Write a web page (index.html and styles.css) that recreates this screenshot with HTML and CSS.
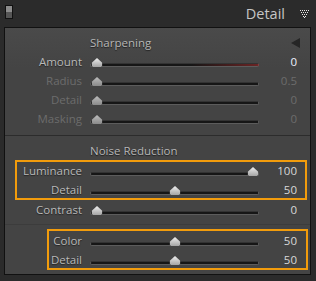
FILE: index.html
```html
<!DOCTYPE html>
<html lang="en">
<head>
  <meta charset="UTF-8">
  <title>Detail</title>
  <link rel="stylesheet" href="styles.css">
</head>
<body>
  <div class="header">
    <span class="solo"></span>
    <span class="title">Detail</span>
    <svg class="menu" width="10" height="8" viewBox="0 0 10 8">
      <g fill="#e6e6e6">
        <rect x="0" y="0" width="1" height="1"/><rect x="2" y="0" width="1" height="1"/><rect x="4" y="0" width="1" height="1"/><rect x="6" y="0" width="1" height="1"/><rect x="8" y="0" width="1" height="1"/>
        <rect x="1" y="2" width="1" height="1"/><rect x="3" y="2" width="1" height="1"/><rect x="5" y="2" width="1" height="1"/><rect x="7" y="2" width="1" height="1"/>
        <rect x="2" y="4" width="1" height="1"/><rect x="4" y="4" width="1" height="1"/><rect x="6" y="4" width="1" height="1"/>
        <rect x="3" y="6" width="1" height="1"/><rect x="5" y="6" width="1" height="1"/>
        <rect x="4" y="7" width="1" height="1"/>
      </g>
    </svg>
  </div>

  <div class="panel">
    <section class="sec first">
      <div class="sec-head">
        <span>Sharpening</span>
        <svg class="collapse" width="9" height="10" viewBox="0 0 9 10"><path d="M9 0 L9 10 L0 5 Z" fill="#262626"/></svg>
      </div>
      <div class="row">
        <span class="lbl">Amount</span>
        <div class="track red"><span class="thumb" style="left:0%"></span></div>
        <span class="val hot">0</span>
      </div>
      <div class="row off">
        <span class="lbl">Radius</span>
        <div class="track"><span class="thumb" style="left:0%"></span></div>
        <span class="val">0.5</span>
      </div>
      <div class="row off">
        <span class="lbl">Detail</span>
        <div class="track"><span class="thumb" style="left:0%"></span></div>
        <span class="val">0</span>
      </div>
      <div class="row off">
        <span class="lbl">Masking</span>
        <div class="track"><span class="thumb" style="left:0%"></span></div>
        <span class="val">0</span>
      </div>
    </section>

    <section class="sec second">
      <div class="sec-head"><span>Noise Reduction</span></div>
      <div class="group g1">
        <div class="row">
          <span class="lbl">Luminance</span>
          <div class="track"><span class="thumb" style="left:100%"></span></div>
          <span class="val">100</span>
        </div>
        <div class="row">
          <span class="lbl">Detail</span>
          <div class="track"><span class="thumb" style="left:50%"></span></div>
          <span class="val">50</span>
        </div>
      </div>
      <div class="row">
        <span class="lbl">Contrast</span>
        <div class="track"><span class="thumb" style="left:0%"></span></div>
        <span class="val">0</span>
      </div>
    </section>

    <section class="sec third">
      <div class="group g2">
        <div class="row">
          <span class="lbl">Color</span>
          <div class="track"><span class="thumb" style="left:50%"></span></div>
          <span class="val">50</span>
        </div>
        <div class="row">
          <span class="lbl">Detail</span>
          <div class="track"><span class="thumb" style="left:50%"></span></div>
          <span class="val">50</span>
        </div>
      </div>
    </section>
  </div>
</body>
</html>
```

FILE: styles.css
```css
body {
  margin: 0;
  width: 316px;
  height: 281px;
  overflow: hidden;
  background: #2b2b2b;
  font-family: 'Open Sans', 'Noto Sans', sans-serif;
  font-size: 11.5px;
  color: #bdbdbd;
}
.header {
  height: 27px;
  display: flex;
  align-items: center;
  padding: 0 6px 0 5px;
}
.solo {
  width: 6px;
  height: 12px;
  border: 1px solid #111;
  background: linear-gradient(#8c8c8c 50%, #555 50%);
  align-self: flex-start;
  margin-top: 5px;
}
.header .title {
  margin-left: auto;
  font-size: 14.5px;
  color: #c6c6c6;
  padding-bottom: 1px;
}
.menu {
  margin-left: 15px;
  margin-top: 1px;
}
.panel {
  margin: 0 5px 0 4px;
  border: 1px solid #111;
  background: linear-gradient(#4a4a4a, #444 40px);
}
.sec {
  padding: 5px 0 7px;
  border-bottom: 1px solid #2c2c2c;
}
.sec.second {
  padding-bottom: 5px;
  border-bottom-color: #3c3c3c;
}
.sec.third {
  padding: 4px 0 4px;
  border-bottom: none;
}
.sec-head {
  height: 19px;
  line-height: 19px;
  padding-left: 85px;
  display: flex;
  align-items: center;
  color: #b6b6b6;
  text-shadow: 0 1px 1px rgba(0, 0, 0, 0.6);
}
.collapse {
  margin-left: auto;
  margin-right: 10px;
}
.row {
  height: 19px;
  display: grid;
  grid-template-columns: 77px 169px 1fr;
  column-gap: 8px;
  padding-right: 13px;
  align-items: center;
}
.lbl {
  text-align: right;
  color: #b8b8b8;
  text-shadow: 0 1px 1px rgba(0, 0, 0, 0.5);
}
.val {
  text-align: right;
  color: #d8d8d8;
}
.val.hot {
  color: #eef0ff;
}
.row.off .lbl,
.row.off .val {
  color: #6c6c6c;
  text-shadow: none;
}
.track {
  position: relative;
  height: 9px;
  margin: 2px 6px 0 7px;
}
.track::before {
  content: "";
  position: absolute;
  left: -7px;
  right: -6px;
  bottom: 0;
  height: 2px;
  border: 1px solid #5c5c5c;
  border-top-color: #333;
  border-radius: 3px;
  background: #161616;
}
.track.red::before {
  background: linear-gradient(to right, #161616 60%, #6a2424);
  border-color: #333 #8a4040 #5c5c5c #5c5c5c;
}
.thumb {
  position: absolute;
  top: 0;
  width: 11px;
  height: 9px;
  transform: translateX(-50%);
  background: linear-gradient(#efefef, #a4a4a4);
  clip-path: polygon(50% 0, 100% 55%, 100% 80%, 85% 100%, 15% 100%, 0 80%, 0 55%);
}
.row.off .thumb {
  background: linear-gradient(#bdbdbd, #8a8a8a);
}
.group {
  position: relative;
  padding: 1px 0;
}
.group.g2 {
  padding: 2px 0 1px;
}
.group::after {
  content: "";
  position: absolute;
  top: 0;
  bottom: 0;
  left: 10px;
  right: 3px;
  border: 2px solid #f29c0c;
}
.group.g2::after {
  left: 42px;
  right: 2px;
}
```
